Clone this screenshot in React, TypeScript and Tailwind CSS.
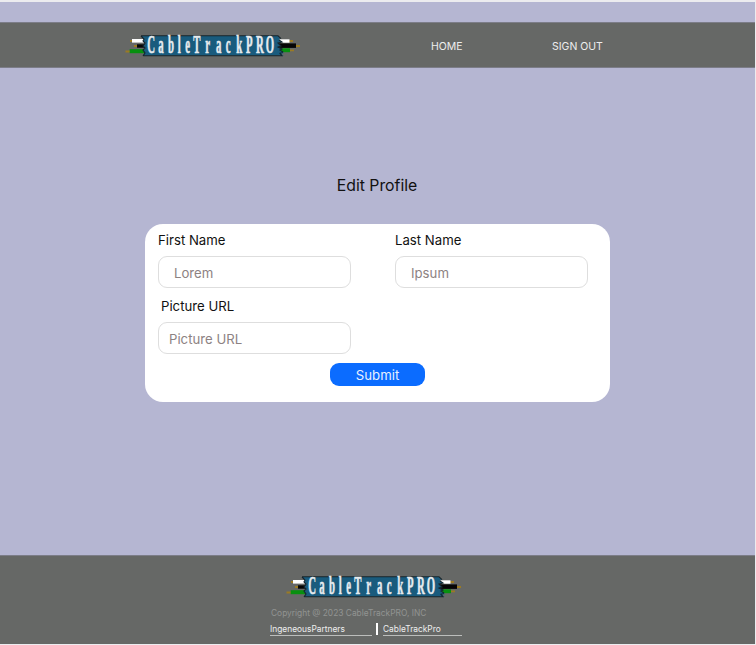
const LETTER_X = [151.2, 161, 171, 179.2, 187.6, 196.8, 207.6, 218.6, 228.2, 239.2, 249.2, 259.8, 270].map(
  (x) => (x - 125) / 0.44,
);

function Logo({ className }: { className: string }) {
  return (
    <svg width="176" height="22" viewBox="0 0 176 22" className={className} role="img" aria-label="CableTrackPRO">
      <path d="M5 6h3M9 11h4M0.5 16.5h5M164 6h4M170 11h5M165 15.3h4" stroke="#9a7b24" strokeWidth="1.8" />
      <rect x="7" y="4" width="12" height="3.6" fill="#fff" />
      <rect x="12" y="9.3" width="8" height="3.4" fill="#050505" />
      <rect x="4.7" y="14.2" width="15" height="4" fill="#07900f" />
      <rect x="154" y="4.3" width="10.5" height="3.4" fill="#fff" />
      <rect x="153" y="8.4" width="18" height="4.5" fill="#050505" />
      <rect x="154" y="13.3" width="11" height="3.9" fill="#07900f" />
      <path
        d="M16 1h137l2 3-1 1 3 2-4 1 3 3-3 1 4 2-2 1 4 3-3 1 3 1.5H18l2-3-2-2 2-2-2-2 2-3-2-2 1-3z"
        fill="#195b7d"
      />
      <path
        d="M16 0.8h137l3 2.8M18 20.8h139l-2-2.5 3-1M16 1l3 3-1 2 2 2-2 3 2 2-2 2 2 3-2 3M154 5l3 2-4 1 3 3-3 1 4 2-2 1 3 2"
        fill="none"
        stroke="#15242c"
        strokeWidth="1.1"
      />
      <text
        transform="translate(0 17.9) scale(0.44 1)"
        x={LETTER_X.join(" ")}
        textAnchor="middle"
        fontSize="24.5"
        fontWeight="700"
        fill="#e6ebef"
        stroke="#e6ebef"
        strokeWidth="0.6"
        fontFamily="Liberation Serif, serif"
      >
        CableTrackPRO
      </text>
    </svg>
  );
}

function Field({ label, value, labelClass, inputClass }: { label: string; value: string; labelClass: string; inputClass: string }) {
  return (
    <label className="block w-[193px]">
      <span className={`block h-5 text-[13.2px] leading-5 text-[#111] ${labelClass}`}>{label}</span>
      <input
        placeholder={value}
        className={`mt-[6px] block h-8 w-full rounded-[9px] border border-[#dedede] bg-white pt-[2px] text-[13.2px] text-black outline-none placeholder:text-[#8d8282] ${inputClass}`}
      />
    </label>
  );
}

export default function App() {
  return (
    <div className="flex h-[645px] w-[756px] flex-col overflow-hidden border-t-2 border-r border-b border-[#ececef] bg-[#b5b6d2] font-['Inter',sans-serif]">
      <header className="mt-5 flex h-[46px] shrink-0 items-center border-y border-[#7c7d88] bg-[#666866] text-[10.5px] text-[#eeeeee]">
        <Logo className="mt-px ml-[125px] shrink-0 overflow-visible" />
        <nav className="flex pt-[3px]">
          <a className="ml-[130px] w-[121px]">HOME</a>
          <a>SIGN OUT</a>
        </nav>
      </header>

      <main className="flex grow flex-col pl-[145px]">
        <h1 className="mt-[106px] w-[464px] text-center text-[15.8px] leading-6 text-[#111]">Edit Profile</h1>
        <form className="mt-[26px] h-[178px] w-[465px] rounded-[18px] bg-white pt-[6px] pl-[13px]">
          <div className="grid grid-cols-[237px_193px] gap-y-2">
            <Field label="First Name" value="Lorem" labelClass="" inputClass="pl-[15px]" />
            <Field label="Last Name" value="Ipsum" labelClass="" inputClass="pl-[15px]" />
            <Field label="Picture URL" value="Picture URL" labelClass="pl-[3px]" inputClass="pl-[10px]" />
          </div>
          <button type="button" className="mt-[9px] ml-[172px] block h-[23px] w-[95px] rounded-[9px] bg-[#0b6cff] pt-px text-[13.2px] leading-[22px] text-[#e8f0ff]">
            Submit
          </button>
        </form>
      </main>

      <footer className="h-[89px] shrink-0 border-t border-[#7c7d88] bg-[#666866]">
        <Logo className="mt-5 ml-[286px] overflow-visible" />
        <p className="mt-[9px] ml-[271px] text-[8.4px] leading-3 text-[#929492]">Copyright @ 2023 CableTrackPRO, INC</p>
        <div className="mt-1 ml-[270px] flex text-[8.4px] leading-[13px] text-[#eeeeee]">
          <a className="h-[13px] w-[102px] border-b border-[#bcbebc]">IngeneousPartners</a>
          <span className="ml-1 h-3 w-[2px] bg-white" />
          <a className="ml-[5px] h-[13px] w-[79px] border-b border-[#bcbebc]">CableTrackPro</a>
        </div>
      </footer>
    </div>
  );
}
